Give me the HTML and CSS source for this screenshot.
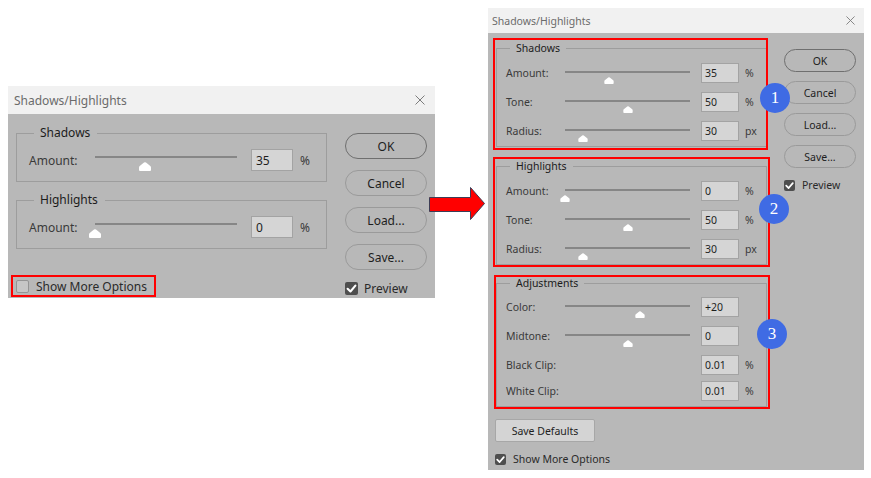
FILE: index.html
```html
<!DOCTYPE html>
<html lang="en">
<head>
<meta charset="utf-8">
<title>Shadows/Highlights</title>
<link rel="stylesheet" href="styles.css">
</head>
<body>
<div class="page">
  <!-- Small dialog -->
  <div class="dialog dialog-s">
    <div class="titlebar">
      <span class="title">Shadows/Highlights</span>
      <svg class="close" viewBox="0 0 10 10"><path d="M0.5 0.5 L9.5 9.5 M9.5 0.5 L0.5 9.5"/></svg>
    </div>
    <div class="dbody">
      <div class="main">
        <fieldset class="group">
          <legend>Shadows</legend>
          <div class="row">
            <span class="lbl">Amount:</span>
            <div class="slider"><span class="track"></span><svg class="thumb" style="left:35%" viewBox="0 0 12 9"><path d="M1 9 H11 Q12 9 12 8 V5.5 Q12 4.5 11 3.8 L7 0.6 Q6 0 5 0.6 L1 3.8 Q0 4.5 0 5.5 V8 Q0 9 1 9Z"/></svg></div>
            <span class="field">35</span><span class="unit">%</span>
          </div>
        </fieldset>
        <fieldset class="group">
          <legend>Highlights</legend>
          <div class="row">
            <span class="lbl">Amount:</span>
            <div class="slider"><span class="track"></span><svg class="thumb" style="left:0%" viewBox="0 0 12 9"><path d="M1 9 H11 Q12 9 12 8 V5.5 Q12 4.5 11 3.8 L7 0.6 Q6 0 5 0.6 L1 3.8 Q0 4.5 0 5.5 V8 Q0 9 1 9Z"/></svg></div>
            <span class="field">0</span><span class="unit">%</span>
          </div>
        </fieldset>
      </div>
      <div class="side">
        <button class="btn btn-default">OK</button>
        <button class="btn">Cancel</button>
        <button class="btn">Load...</button>
        <button class="btn">Save...</button>
      </div>
      <div class="check check-annot">
        <span class="box box-off"></span><span>Show More Options</span>
      </div>
      <div class="check check-preview">
        <span class="box box-on"><svg viewBox="0 0 10 10"><path d="M2 5.2 L4.2 7.3 L8 2.8"/></svg></span><span>Preview</span>
      </div>
    </div>
  </div>

  <!-- Large dialog -->
  <div class="dialog dialog-l">
    <div class="titlebar">
      <span class="title">Shadows/Highlights</span>
      <svg class="close" viewBox="0 0 10 10"><path d="M0.5 0.5 L9.5 9.5 M9.5 0.5 L0.5 9.5"/></svg>
    </div>
    <div class="dbody">
      <div class="main">
        <div class="annot annot-1">
          <fieldset class="group">
            <legend>Shadows</legend>
            <div class="row">
              <span class="lbl">Amount:</span>
              <div class="slider"><span class="track"></span><svg class="thumb" style="left:35%" viewBox="0 0 12 9"><path d="M1 9 H11 Q12 9 12 8 V5.5 Q12 4.5 11 3.8 L7 0.6 Q6 0 5 0.6 L1 3.8 Q0 4.5 0 5.5 V8 Q0 9 1 9Z"/></svg></div>
              <span class="field">35</span><span class="unit">%</span>
            </div>
            <div class="row">
              <span class="lbl">Tone:</span>
              <div class="slider"><span class="track"></span><svg class="thumb" style="left:50%" viewBox="0 0 12 9"><path d="M1 9 H11 Q12 9 12 8 V5.5 Q12 4.5 11 3.8 L7 0.6 Q6 0 5 0.6 L1 3.8 Q0 4.5 0 5.5 V8 Q0 9 1 9Z"/></svg></div>
              <span class="field">50</span><span class="unit">%</span>
            </div>
            <div class="row">
              <span class="lbl">Radius:</span>
              <div class="slider"><span class="track"></span><svg class="thumb" style="left:14.5%" viewBox="0 0 12 9"><path d="M1 9 H11 Q12 9 12 8 V5.5 Q12 4.5 11 3.8 L7 0.6 Q6 0 5 0.6 L1 3.8 Q0 4.5 0 5.5 V8 Q0 9 1 9Z"/></svg></div>
              <span class="field">30</span><span class="unit">px</span>
            </div>
          </fieldset>
          <span class="badge badge-1">1</span>
        </div>

        <div class="annot annot-2">
          <fieldset class="group">
            <legend>Highlights</legend>
            <div class="row">
              <span class="lbl">Amount:</span>
              <div class="slider"><span class="track"></span><svg class="thumb" style="left:0%" viewBox="0 0 12 9"><path d="M1 9 H11 Q12 9 12 8 V5.5 Q12 4.5 11 3.8 L7 0.6 Q6 0 5 0.6 L1 3.8 Q0 4.5 0 5.5 V8 Q0 9 1 9Z"/></svg></div>
              <span class="field">0</span><span class="unit">%</span>
            </div>
            <div class="row">
              <span class="lbl">Tone:</span>
              <div class="slider"><span class="track"></span><svg class="thumb" style="left:50%" viewBox="0 0 12 9"><path d="M1 9 H11 Q12 9 12 8 V5.5 Q12 4.5 11 3.8 L7 0.6 Q6 0 5 0.6 L1 3.8 Q0 4.5 0 5.5 V8 Q0 9 1 9Z"/></svg></div>
              <span class="field">50</span><span class="unit">%</span>
            </div>
            <div class="row">
              <span class="lbl">Radius:</span>
              <div class="slider"><span class="track"></span><svg class="thumb" style="left:14.5%" viewBox="0 0 12 9"><path d="M1 9 H11 Q12 9 12 8 V5.5 Q12 4.5 11 3.8 L7 0.6 Q6 0 5 0.6 L1 3.8 Q0 4.5 0 5.5 V8 Q0 9 1 9Z"/></svg></div>
              <span class="field">30</span><span class="unit">px</span>
            </div>
          </fieldset>
          <span class="badge badge-2">2</span>
        </div>

        <div class="annot annot-3">
          <fieldset class="group group-adj">
            <legend>Adjustments</legend>
            <div class="row">
              <span class="lbl">Color:</span>
              <div class="slider"><span class="track"></span><svg class="thumb" style="left:60%" viewBox="0 0 12 9"><path d="M1 9 H11 Q12 9 12 8 V5.5 Q12 4.5 11 3.8 L7 0.6 Q6 0 5 0.6 L1 3.8 Q0 4.5 0 5.5 V8 Q0 9 1 9Z"/></svg></div>
              <span class="field">+20</span>
            </div>
            <div class="row">
              <span class="lbl">Midtone:</span>
              <div class="slider"><span class="track"></span><svg class="thumb" style="left:50%" viewBox="0 0 12 9"><path d="M1 9 H11 Q12 9 12 8 V5.5 Q12 4.5 11 3.8 L7 0.6 Q6 0 5 0.6 L1 3.8 Q0 4.5 0 5.5 V8 Q0 9 1 9Z"/></svg></div>
              <span class="field">0</span>
            </div>
            <div class="row">
              <span class="lbl lbl-wide">Black Clip:</span>
              <span class="field">0.01</span><span class="unit">%</span>
            </div>
            <div class="row row-tight">
              <span class="lbl lbl-wide">White Clip:</span>
              <span class="field">0.01</span><span class="unit">%</span>
            </div>
          </fieldset>
          <span class="badge badge-3">3</span>
        </div>

        <button class="btn-rect">Save Defaults</button>
        <div class="check check-more">
          <span class="box box-on"><svg viewBox="0 0 10 10"><path d="M2 5.2 L4.2 7.3 L8 2.8"/></svg></span><span>Show More Options</span>
        </div>
      </div>
      <div class="side">
        <button class="btn btn-default">OK</button>
        <button class="btn">Cancel</button>
        <button class="btn">Load...</button>
        <button class="btn">Save...</button>
        <div class="check check-preview">
          <span class="box box-on"><svg viewBox="0 0 10 10"><path d="M2 5.2 L4.2 7.3 L8 2.8"/></svg></span><span>Preview</span>
        </div>
      </div>
    </div>
  </div>

  <svg class="arrow" viewBox="0 0 58 35"><path d="M1.5 11.5 H42.5 V1.5 L56.5 17.5 L42.5 33.5 V25.5 H1.5 Z"/></svg>
</div>
</body>
</html>
```

FILE: styles.css
```css
* { box-sizing: border-box; }

body {
  margin: 0;
  background: #ffffff;
  font-family: "Noto Sans", "Open Sans", sans-serif;
  color: #2e2e2e;
}

.page {
  position: relative;
  width: 871px;
  height: 478px;
  display: flex;
  align-items: flex-start;
  padding: 8px 0 0 8px;
}

/* ---------- dialog shell ---------- */
.dialog {
  background: #b8b8b8;
  display: flex;
  flex-direction: column;
}
.dialog-s { width: 427px; height: 212px; margin-top: 78px; font-size: 12px; }
.dialog-l { width: 376px; height: 462px; margin-left: 53px; font-size: 10.5px; }

.titlebar {
  background: #f1f1f1;
  color: #6b6b6b;
  display: flex;
  align-items: center;
  justify-content: space-between;
  flex: none;
}
.dialog-s .titlebar { height: 28px; padding: 0 10px 0 6px; }
.dialog-l .titlebar { height: 25px; padding: 0 9px 0 4px; }

.close { fill: none; stroke: #7c7c7c; stroke-width: 1; }
.dialog-s .close { width: 10px; height: 10px; }
.dialog-l .close { width: 9px; height: 9px; }

.dbody { flex: 1; display: grid; align-items: start; }
.dialog-s .dbody {
  grid-template-columns: 311px 82px;
  grid-template-rows: 156px 22px;
  column-gap: 18px;
  row-gap: 5px;
  padding: 0 8px;
}
.dialog-l .dbody {
  grid-template-columns: 271px 72px;
  column-gap: 17px;
  padding: 0 8px;
}

.main { display: flex; flex-direction: column; align-items: flex-start; }
.dialog-s .main { padding-top: 11px; }
.dialog-l .main { padding-top: 8px; }

/* ---------- group boxes ---------- */
.group {
  margin: 0;
  border: 1px solid #9d9d9d;
  min-width: 0;
}
.group legend { color: #1c1c1c; }

.dialog-s .group { width: 311px; padding: 8px 11px 10px 12px; }
.dialog-s .group + .group { margin-top: 10px; }
.dialog-s .group legend { margin-left: 5px; padding: 0 7px 0 6px; line-height: 16px; }

.dialog-l .group { width: 271px; padding: 8px 9px 5px 9px; }
.dialog-l .group legend { margin-left: 4px; padding: 0 6px; line-height: 14px; }
.dialog-l .group-adj { padding-top: 7px; }

/* ---------- rows ---------- */
.row { display: flex; align-items: center; }
.lbl { color: #3a3a3a; flex: none; }
.unit { color: #3a3a3a; }

.slider { position: relative; align-self: stretch; flex: none; }
.track { display: block; height: 2px; background: #868686; }
.thumb { position: absolute; transform: translateX(-50%); fill: #ffffff; }

.field {
  background: #d5d5d5;
  border: 1px solid #a3a3a3;
  color: #1e1e1e;
  display: flex;
  align-items: center;
  flex: none;
}

.dialog-s .row { height: 22px; }
.dialog-s .lbl { width: 66px; }
.dialog-s .slider { width: 142px; margin-right: 14px; }
.dialog-s .track { margin-top: 7px; }
.dialog-s .thumb { top: 13px; width: 12px; height: 9px; }
.dialog-s .field { width: 42px; height: 22px; padding-left: 4px; margin-right: 7px; }

.dialog-l .row { height: 20px; }
.dialog-l .row + .row { margin-top: 9px; }
.dialog-l .row-tight { margin-top: 6px !important; }
.dialog-l .lbl { width: 59px; }
.dialog-l .lbl-wide { width: 195px; }
.dialog-l .slider { width: 125px; margin-right: 11px; }
.dialog-l .track { margin-top: 8px; }
.dialog-l .thumb { top: 14px; width: 10px; height: 7px; }
.dialog-l .field { width: 38px; height: 20px; padding-left: 3px; margin-right: 6px; }

/* ---------- buttons ---------- */
.side { display: flex; flex-direction: column; }
.dialog-s .side { padding-top: 19px; gap: 11px; }
.dialog-l .side { padding-top: 16px; gap: 9px; }

.btn {
  font: inherit;
  color: #1e1e1e;
  background: transparent;
  border: 1px solid #9a9a9a;
  border-radius: 999px;
  padding: 0;
  display: flex;
  align-items: center;
  justify-content: center;
}
.btn-default { border-color: #6f6f6f; }
.dialog-s .btn { height: 26px; }
.dialog-l .btn { height: 23px; }

.btn-rect {
  font: inherit;
  color: #1e1e1e;
  background: #d4d4d4;
  border: 1px solid #a7a7a7;
  border-radius: 2px;
  padding: 0;
  width: 100px;
  height: 23px;
  margin: 12px 0 0 -1px;
}

/* ---------- checkboxes ---------- */
.check { display: flex; align-items: center; gap: 7px; color: #2a2a2a; }
.box { flex: none; border-radius: 2px; display: flex; align-items: center; justify-content: center; }
.box-off { background: #c6c6c6; border: 1px solid #949494; }
.box-on { background: #4e4e4e; }
.box-on svg { width: 100%; height: 100%; fill: none; stroke: #ffffff; stroke-width: 1.6; stroke-linecap: round; stroke-linejoin: round; }

.dialog-s .box { width: 13px; height: 13px; }
.dialog-l .box { width: 11px; height: 11px; }

.check-annot {
  justify-self: start;
  height: 22px;
  border: 2px solid #ff0000;
  margin-left: -5px;
  padding: 0 7px 0 3px;
}
.dialog-s .check-preview { margin-top: 5px; gap: 6px; }
.dialog-l .check-preview { margin-top: 1px; }
.check-more { margin: 10px 0 0 -1px; }

/* ---------- annotations ---------- */
.annot { position: relative; }
.annot + .annot { margin-top: 12px; }
.annot-3 { margin-top: 11px !important; }
.annot::after {
  content: "";
  position: absolute;
  border: 2px solid #ff0000;
  pointer-events: none;
  z-index: 1;
}
.annot-1::after { inset: -3px -1px -3px -3px; }
.annot-2::after { inset: -2px -3px -2px -3px; }
.annot-3::after { inset: -1px -3px -2px -2px; }

.badge {
  position: absolute;
  z-index: 2;
  width: 30px;
  height: 30px;
  border-radius: 50%;
  background: #3f6be4;
  color: #ffffff;
  font-family: "Liberation Serif", serif;
  font-size: 17px;
  display: flex;
  align-items: center;
  justify-content: center;
}
.badge-1 { top: 42px; right: -23px; }
.badge-2 { top: 35px; right: -22px; }
.badge-3 { top: 43px; right: -20px; }

.arrow {
  position: absolute;
  left: 428px;
  top: 186px;
  width: 58px;
  height: 35px;
  fill: #ff0000;
  stroke: #3d3d55;
  stroke-width: 1;
  stroke-linejoin: miter;
}
```
